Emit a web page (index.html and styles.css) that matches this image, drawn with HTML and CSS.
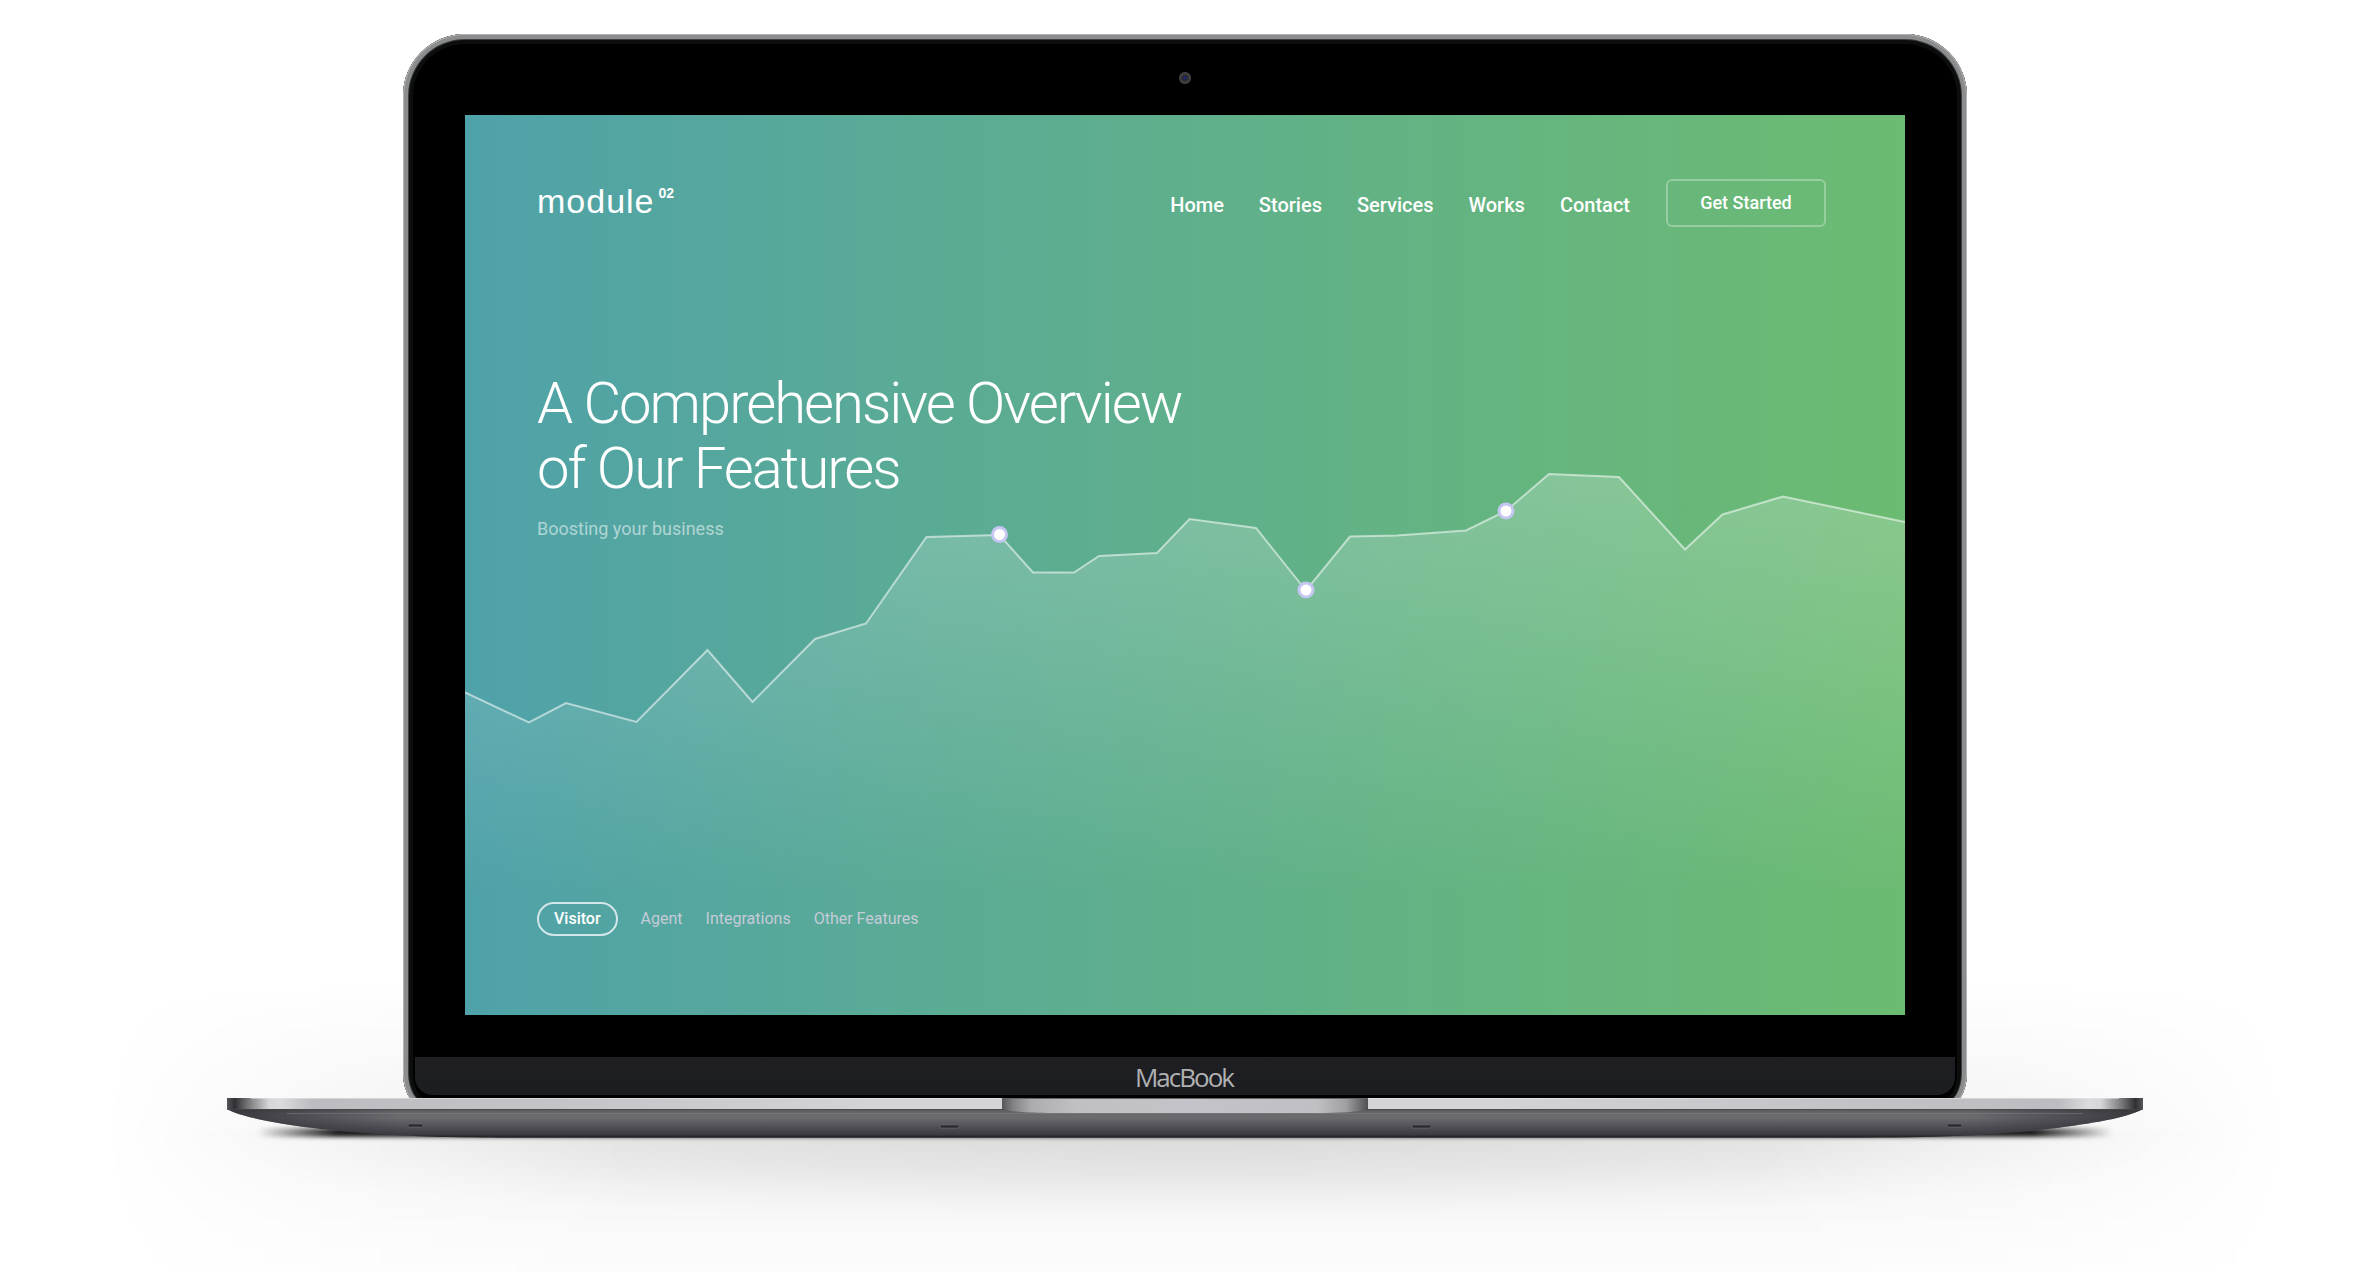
FILE: index.html
```html
<!DOCTYPE html>
<html lang="en">
<head>
<meta charset="utf-8">
<title>module 02</title>
<meta name="viewport" content="width=device-width, initial-scale=1">
<link rel="stylesheet" href="styles.css">
</head>
<body>
<div class="laptop">
  <div class="lid">
    <div class="bezel-top"><span class="camera"></span></div>
    <div class="screen">
      <svg class="chart" viewBox="0 0 1440 900" preserveAspectRatio="none" aria-hidden="true">
        <defs>
          <linearGradient id="area" gradientUnits="userSpaceOnUse" x1="0" y1="358" x2="0" y2="780">
            <stop offset="0" stop-color="#fff" stop-opacity=".21"/>
            <stop offset=".35" stop-color="#fff" stop-opacity=".14"/>
            <stop offset="1" stop-color="#fff" stop-opacity="0"/>
          </linearGradient>
        </defs>
        <path fill="url(#area)" d="M0 577.5L64 607.5L101 588L171.500 607L242.500 535L287.500 587L350 524L401 508.500L461.500 422L534.500 420L568 457.500H609L634 441L692 438L724.500 404L791 413L841 475.500L885 421.500L932 420.500L1001 415.500L1041 396L1084 359L1154 362L1220 434.500L1257.500 399.500L1318 381.500L1440 407V900H0Z"/>
        <path fill="none" stroke="#fff" stroke-opacity=".55" stroke-width="2" d="M0 577.5L64 607.5L101 588L171.500 607L242.500 535L287.500 587L350 524L401 508.500L461.500 422L534.500 420L568 457.500H609L634 441L692 438L724.500 404L791 413L841 475.500L885 421.500L932 420.500L1001 415.500L1041 396L1084 359L1154 362L1220 434.500L1257.500 399.500L1318 381.500L1440 407"/>
        <g fill="#fff" stroke="#c5c6f2" stroke-width="3">
          <circle cx="534.500" cy="419.500" r="7"/>
          <circle cx="841" cy="475" r="7"/>
          <circle cx="1041" cy="396" r="7"/>
        </g>
      </svg>
      <header class="topbar">
        <a class="logo" href="#">module<sup class="logo-mark">02</sup></a>
        <nav class="nav" aria-label="Main">
          <a href="#">Home</a>
          <a href="#">Stories</a>
          <a href="#">Services</a>
          <a href="#">Works</a>
          <a href="#">Contact</a>
        </nav>
        <button class="cta" type="button">Get Started</button>
      </header>
      <main class="hero">
        <h1 class="title">A Comprehensive Overview<br>of Our Features</h1>
        <p class="subtitle">Boosting your business</p>
      </main>
      <nav class="tabs" aria-label="Features">
        <button class="tab tab-active" type="button">Visitor</button>
        <button class="tab" type="button">Agent</button>
        <button class="tab" type="button">Integrations</button>
        <button class="tab" type="button">Other Features</button>
      </nav>
    </div>
    <div class="chin">MacBook</div>
  </div>
  <div class="base">
    <div class="ambient"></div>
    <div class="ground"></div>
    <div class="contact"></div>
    <svg class="deck" viewBox="0 0 1916 42" preserveAspectRatio="none" aria-hidden="true">
      <defs>
        <linearGradient id="edge">
          <stop offset="0" stop-color="#55555a"/>
          <stop offset=".004" stop-color="#303034"/>
          <stop offset=".011" stop-color="#77777a"/>
          <stop offset=".022" stop-color="#d6d6d8"/>
          <stop offset=".028" stop-color="#dcdcde"/>
          <stop offset=".044" stop-color="#bdbcc1"/>
          <stop offset=".16" stop-color="#c3c2c7"/>
          <stop offset=".34" stop-color="#d4d4d6"/>
          <stop offset=".66" stop-color="#d4d4d6"/>
          <stop offset=".84" stop-color="#c3c2c7"/>
          <stop offset=".956" stop-color="#bdbcc1"/>
          <stop offset=".972" stop-color="#dcdcde"/>
          <stop offset=".978" stop-color="#d6d6d8"/>
          <stop offset=".989" stop-color="#77777a"/>
          <stop offset=".996" stop-color="#303034"/>
          <stop offset="1" stop-color="#55555a"/>
        </linearGradient>
        <linearGradient id="under" x2="0" y2="1">
          <stop offset="0" stop-color="#55545a"/>
          <stop offset=".14" stop-color="#69686c"/>
          <stop offset=".3" stop-color="#6b6a6f"/>
          <stop offset=".6" stop-color="#525157"/>
          <stop offset=".88" stop-color="#3c3b42"/>
          <stop offset=".95" stop-color="#27262c"/>
          <stop offset="1" stop-color="#4b4b4e"/>
        </linearGradient>
        <linearGradient id="side">
          <stop offset="0" stop-color="#2c2b31" stop-opacity=".8"/>
          <stop offset=".09" stop-color="#2c2b31" stop-opacity="0"/>
          <stop offset=".91" stop-color="#2c2b31" stop-opacity="0"/>
          <stop offset="1" stop-color="#2c2b31" stop-opacity=".8"/>
        </linearGradient>
        <linearGradient id="notch">
          <stop offset="0" stop-color="#56565a"/>
          <stop offset=".03" stop-color="#828286"/>
          <stop offset=".08" stop-color="#acacae"/>
          <stop offset=".2" stop-color="#c0c0c2"/>
          <stop offset=".5" stop-color="#c4c3c9"/>
          <stop offset=".86" stop-color="#c0bfc4"/>
          <stop offset=".94" stop-color="#a0a0a3"/>
          <stop offset="1" stop-color="#505054"/>
        </linearGradient>
      </defs>
      <path fill="url(#under)" d="M0 11C12 18 40 24 86 30C130 35 180 40 300 40H1616C1736 40 1786 35 1830 30C1876 24 1904 18 1916 11Z"/>
      <path fill="url(#side)" d="M0 11C12 18 40 24 86 30C130 35 180 40 300 40H1616C1736 40 1786 35 1830 30C1876 24 1904 18 1916 11Z"/>
      <path stroke="#818085" stroke-opacity=".5" d="M60 15.5H1856"/>
      <path fill="url(#edge)" d="M0 0H1916V11H0Z"/>
      <path stroke="#e4e4e6" stroke-opacity=".6" d="M24 .5H1892"/>
      <path stroke="#48474c" stroke-opacity=".7" d="M0 11.500H1916"/>
      <path fill="url(#notch)" d="M775 0H1141V11C1132 14 1112 15 1090 15H826C804 15 784 14 775 11Z"/>
      <path stroke="#66666a" d="M775 .5H1141"/>
      <g fill="#2b2a30" stroke="#77767b" stroke-width="1" stroke-opacity=".5">
        <rect x="181" y="26" width="15" height="3" rx="1.500"/>
        <rect x="713" y="27" width="19" height="3" rx="1.500"/>
        <rect x="1185" y="27" width="19" height="3" rx="1.500"/>
        <rect x="1720" y="26" width="15" height="3" rx="1.500"/>
      </g>
    </svg>
  </div>
</div>
</body>
</html>
```
FILE: styles.css
```css
* {
  box-sizing: border-box;
}

body {
  margin: 0;
  min-height: 100vh;
  padding: 34px 0 0 5px;
  background: #fff;
  font-family: Roboto, "Liberation Sans", sans-serif;
  color: #fff;
  overflow: hidden;
}

.laptop {
  width: 100%;
  max-width: 1916px;
  margin: 0 auto;
  display: flex;
  flex-direction: column;
  align-items: center;
}

/* the lid's rounded foot tucks in behind the deck */
.lid {
  position: relative;
  z-index: 1;
  width: 82%;
  max-width: 1564px;
  margin-bottom: -11px;
  padding: 0 12px 14px;
  background: #000;
  border-radius: 62px 62px 24px 24px / 62px 62px 36px 36px;
  box-shadow:
    inset 0 0 0 1px #b4b4b4,
    inset 0 0 0 5px #8b8c8d,
    inset 0 0 0 6px #3c3d40,
    inset 0 0 0 10px #0c0d0d;
}

.bezel-top {
  height: 81px;
  display: flex;
  justify-content: center;
  align-items: center;
  padding-top: 7px;
}

.camera {
  width: 12px;
  height: 12px;
  border-radius: 50%;
  background: radial-gradient(circle, #23237c 0 1px, #25252e 2px, #3a3a3a 4px, #4a4a4a 6px);
}

.screen {
  position: relative;
  margin: 0 50px 42px;
  min-height: 900px;
  display: flex;
  flex-direction: column;
  padding: 64px 79px 79px 72px;
  background: linear-gradient(90deg, #4fa2a9, #59aa97 28%, #6cbb72);
}

.chart {
  position: absolute;
  inset: 0;
  width: 100%;
  height: 100%;
}

.topbar,
.hero,
.tabs {
  position: relative;
}

.topbar {
  display: flex;
  align-items: center;
}

.logo {
  display: flex;
  margin-right: auto;
  padding-bottom: 4px;
  font-family: "Liberation Sans", sans-serif;
  font-size: 34px;
  line-height: 40px;
  letter-spacing: 1px;
  color: #fff;
  text-decoration: none;
}

.logo-mark {
  margin-left: 4px;
  font-size: 14px;
  line-height: 24px;
  font-weight: 700;
  letter-spacing: 0;
}

.nav {
  display: flex;
  gap: 35px;
  padding-top: 4px;
}

.nav a {
  font-size: 20px;
  line-height: 24px;
  font-weight: 500;
  color: #fff;
  text-decoration: none;
}

.cta {
  width: 160px;
  height: 48px;
  margin-left: 36px;
  padding: 0;
  border: 2px solid rgba(255, 255, 255, .3);
  border-radius: 6px;
  background: none;
  font: 500 18px/24px Roboto, sans-serif;
  color: #fff;
}

.hero {
  margin-top: 144px;
}

.title {
  margin: 0;
  font-size: 58px;
  line-height: 65px;
  font-weight: 300;
  letter-spacing: -2px;
}

.subtitle {
  margin: 16px 0 0;
  font-size: 18px;
  line-height: 24px;
  font-weight: 400;
  color: rgba(255, 255, 255, .55);
}

.tabs {
  display: flex;
  align-items: center;
  gap: 23px;
  margin-top: auto;
}

.tab {
  padding: 0;
  border: 0;
  background: none;
  font: 400 16px/20px Roboto, sans-serif;
  color: #c6cbd8;
}

.tab-active {
  padding: 5px 15px;
  border: 2px solid #d3e6ea;
  border-radius: 17px;
  font-weight: 500;
  color: #fff;
}

.chin {
  height: 38px;
  padding-right: 2px;
  border-radius: 0 0 18px 18px;
  background: linear-gradient(#1f1f23, #1b1d20);
  font-family: "Open Sans", "Noto Sans", sans-serif;
  font-size: 26px;
  line-height: 40px;
  letter-spacing: -2px;
  text-align: center;
  color: #b0b0b2;
}

.base {
  position: relative;
  width: 100%;
}

.deck {
  position: relative;
  z-index: 2;
  display: block;
  width: 100%;
  height: 42px;
}

.ambient,
.ground,
.contact {
  position: absolute;
}

.ambient {
  left: -127px;
  right: -147px;
  top: -120px;
  height: 154px;
  background: linear-gradient(rgba(0, 0, 0, 0), rgba(0, 0, 0, .065));
  mask-image: linear-gradient(90deg, transparent, rgba(0, 0, 0, .6) 12%, #000 24%, #000 76%, rgba(0, 0, 0, .6) 88%, transparent);
}

.ground {
  left: -127px;
  right: -147px;
  top: 34px;
  height: 140px;
  background:
    radial-gradient(ellipse 50% 90px at 50% 0, rgba(0, 0, 0, .09), rgba(0, 0, 0, .05) 50%, rgba(0, 0, 0, .015) 80%, rgba(0, 0, 0, 0)),
    linear-gradient(rgba(0, 0, 0, .065), rgba(0, 0, 0, .04) 40%, rgba(0, 0, 0, .022) 66%, rgba(0, 0, 0, .01));
  mask-image: linear-gradient(90deg, transparent, rgba(0, 0, 0, .6) 12%, #000 24%, #000 76%, rgba(0, 0, 0, .6) 88%, transparent);
}

.contact {
  left: 30px;
  right: 30px;
  top: 30px;
  height: 9px;
  background: linear-gradient(90deg, transparent, #1c1c1c 80px, #1c1c1c calc(100% - 80px), transparent);
  filter: blur(2px);
}
```
